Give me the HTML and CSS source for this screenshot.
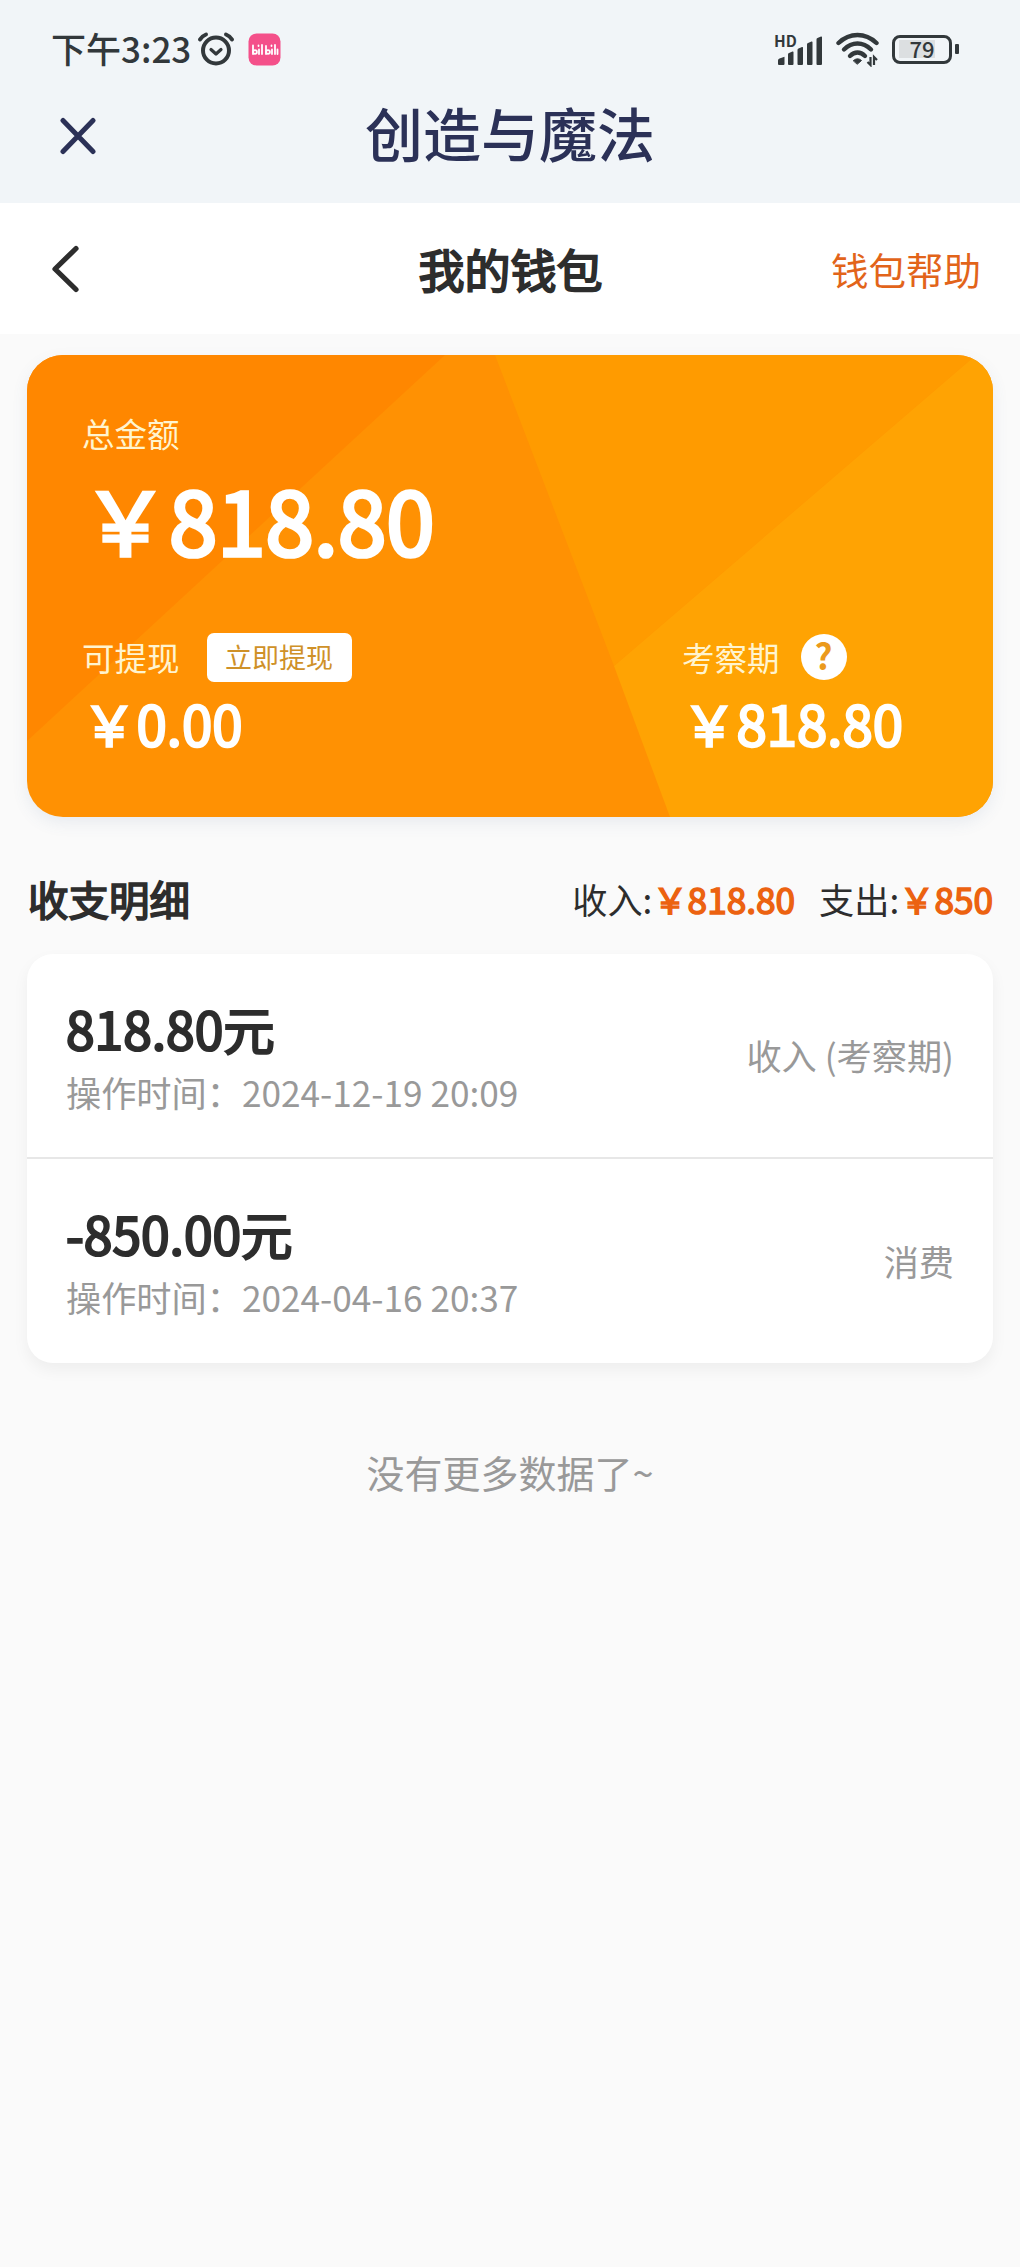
FILE: index.html
```html
<!DOCTYPE html>
<html lang="zh-CN">
<head>
<meta charset="utf-8">
<title>我的钱包</title>
<link rel="stylesheet" href="styles.css">
</head>
<body>
<header class="app-header">
  <div class="status">
    <div class="status-left">
      <span class="clock">下午3:23</span>
      <svg class="alarm" width="38" height="36" viewBox="0 0 38 36" fill="none" stroke="#32383b" stroke-linecap="round" stroke-linejoin="round">
        <circle cx="19" cy="19.5" r="13" stroke-width="4"/>
        <path d="M14 18.500l5 4.500 5-4.500" stroke-width="3.200"/>
        <path d="M3 8.500Q5 5 9 3.500M35 8.500Q33 5 29 3.500" stroke-width="4"/>
      </svg>
      <svg class="bili" width="33" height="33" viewBox="0 0 33 33">
        <rect x=".5" y=".5" width="32" height="32" rx="8" fill="#f4508a"/>
        <g fill="none" stroke="#fff" stroke-width="1.800" stroke-linecap="round">
          <path d="M5 12.500v8.500M10.500 12.500v.5M11 16.500v4.500M14 12v9M18 13v8M23.500 12.500v.5M24 16.500v4.500M27 12v9M29.500 16.500v4.500"/>
          <circle cx="7" cy="19" r="1.900"/><circle cx="20" cy="19" r="1.900"/>
        </g>
      </svg>
    </div>
    <div class="status-right">
      <div class="signal">
        <span class="hd">HD</span>
        <svg width="48" height="34" viewBox="0 0 48 34" fill="#32383b">
          <path d="M2 32v-3.500q0-1.500 1.500-2l5-1.800v7.300q0 1-1 1H3q-1 0-1-1z"/>
          <path d="M12 32V22.500q0-1 1-1.400l3.500-1.500q1-.3 1 .7V32q0 1-1 1H13q-1 0-1-1z"/>
          <path d="M21.500 32V18q0-1 1-1.400l3.500-1.500q1-.3 1 .7V32q0 1-1 1h-3.500q-1 0-1-1z"/>
          <path d="M31 32V12.500q0-1 1-1.400l3.500-1.500q1-.3 1 .7V32q0 1-1 1h-3.500q-1 0-1-1z"/>
          <path d="M40.500 32V7.500q0-1 1-1.400l3.500-1.500q1-.3 1 .7V32q0 1-1 1h-3.500q-1 0-1-1z"/>
        </svg>
      </div>
      <svg class="wifi" width="44" height="35" viewBox="0 0 44 35" fill="none" stroke="#32383b" stroke-width="4.400" stroke-linecap="round">
        <path d="M2.500 11Q11 3 21.500 3T40.500 11"/>
        <path d="M8 17.500Q14 11.500 21.500 11.500T35 17.500"/>
        <path d="M14 24Q17.500 20.500 21.500 20.500T29 24"/>
        <path d="M17.500 28.500q4-3.500 8 0l-4 3.500z" fill="#32383b" stroke-width="1"/>
        <path d="M34.500 25v8l-3-3M38 33v-8l3 3" stroke-width="2.200" stroke-linecap="butt"/>
      </svg>
      <div class="battery"><span>79</span></div>
      <i class="battery-tip"></i>
    </div>
  </div>
  <div class="titlebar">
    <svg width="38" height="38" viewBox="0 0 38 38" fill="none" stroke="#2b3157" stroke-width="5" stroke-linecap="round"><path d="M4 3.500l30 31M34 3.500L4 34.500"/></svg>
    <h1>创造与魔法</h1>
  </div>
</header>

<nav class="nav">
  <svg width="30" height="48" viewBox="0 0 30 48" fill="none" stroke="#2d2d2d" stroke-width="5.200" stroke-linecap="round" stroke-linejoin="round"><path d="M26 3.500L5 24l21 20.500"/></svg>
  <h2 class="heavy">我的钱包</h2>
  <a class="help">钱包帮助</a>
</nav>

<main>
  <section class="card">
    <svg class="facets" viewBox="0 0 966 462" preserveAspectRatio="none">
      <path fill="#ff8700" d="M0 0H418L0 386z"/>
      <path fill="#ff9b00" d="M468 0H949L587 311z"/>
      <path fill="#ffa303" d="M966 0H949L587 311 643 462H966z"/>
    </svg>
    <div class="label">总金额</div>
    <div class="total heavy">￥818.80</div>
    <div class="split">
      <div>
        <div class="label-row"><span class="label">可提现</span><button class="withdraw">立即提现</button></div>
        <div class="amount heavy">￥0.00</div>
      </div>
      <div>
        <div class="label-row"><span class="label">考察期</span><span class="question">?</span></div>
        <div class="amount heavy">￥818.80</div>
      </div>
    </div>
  </section>

  <div class="summary">
    <h3 class="heavy">收支明细</h3>
    <div class="sums">
      <span>收入:<b class="heavy">￥818.80</b></span>
      <span>支出:<b class="heavy">￥850</b></span>
    </div>
  </div>

  <ul class="records">
    <li>
      <div><div class="value heavy">818.80元</div><div class="time">操作时间：2024-12-19 20:09</div></div>
      <span class="kind">收入 (考察期)</span>
    </li>
    <li>
      <div><div class="value heavy">-850.00元</div><div class="time">操作时间：2024-04-16 20:37</div></div>
      <span class="kind">消费</span>
    </li>
  </ul>
  <p class="end">没有更多数据了~</p>
</main>
</body>
</html>
```
FILE: styles.css
```css
* { box-sizing: border-box; margin: 0; padding: 0; }
body {
  min-height: 2267px;
  background: #fafafa;
  color: #2d2d2d;
  font-family: "Noto Sans CJK SC", sans-serif;
}
h1, h2, h3, b { font-weight: 400; }
svg { display: block; flex: none; }
/* regular face thickened by an outline, keeps regular advances */
.heavy { -webkit-text-stroke: .043em currentColor; }

.app-header { height: 203px; background: #f1f5f8; }
.status {
  height: 98px;
  padding: 0 61px 0 51px;
  display: flex;
  justify-content: space-between;
  align-items: center;
  color: #32383b;
}
.status-left, .status-right { display: flex; align-items: center; }
.clock { font-size: 35px; line-height: 42px; font-weight: 500; margin-top: -3px; width: 146px; white-space: nowrap; }
.bili { margin-left: 13px; }
.signal { position: relative; margin-right: 1px; }
.hd {
  position: absolute;
  left: -2px;
  top: -1px;
  font-size: 15.500px;
  line-height: 18px;
  font-weight: 700;
}
.wifi { margin-left: 11px; }
.battery {
  width: 60px;
  height: 29px;
  margin-left: 12px;
  border: 3.500px solid #32383b;
  border-radius: 8px;
  background: linear-gradient(#dcdfe1, #dcdfe1) 4px 2px / 36px 18px no-repeat;
  display: flex;
  align-items: center;
  justify-content: center;
}
.battery span { font-size: 22px; line-height: 22px; font-weight: 500; margin-top: -2px; }
.battery-tip { width: 4px; height: 10px; margin-left: 3px; border-radius: 1px; background: #32383b; }

.titlebar {
  height: 105px;
  padding: 0 59px 37px;
  display: grid;
  grid-template-columns: 38px 1fr 38px;
  align-items: center;
}
.titlebar svg { margin-top: 7px; }
.titlebar h1 { font-size: 58px; line-height: 64px; font-weight: 500; color: #2b3157; text-align: center; }

.nav {
  height: 131px;
  padding: 0 38px 0 50px;
  background: #fff;
  display: grid;
  grid-template-columns: 140px 1fr 151px;
  align-items: center;
}
.nav h2 { font-size: 46px; line-height: 56px; margin-top: -2px; text-align: center; }
.help { font-size: 37.500px; line-height: 46px; color: #e2641a; white-space: nowrap; }

main { padding: 21px 27px 0; }
.card {
  position: relative;
  height: 462px;
  padding: 58px 0 0 55px;
  border-radius: 36px;
  background: #ff9103;
  color: #fff;
  overflow: hidden;
  isolation: isolate;
  box-shadow: 0 6px 16px rgba(80, 110, 150, .1);
}
.facets { position: absolute; inset: 0; width: 100%; height: 100%; z-index: -1; }
.label { font-size: 32.500px; line-height: 40px; color: #fff4cf; }
.total { margin-top: 20px; font-size: 87px; line-height: 90px; }
.split { margin-top: 69px; display: grid; grid-template-columns: 600px 1fr; }
.label-row { height: 50px; display: flex; align-items: center; }
.withdraw {
  width: 145px;
  height: 49px;
  margin-left: 27px;
  border: 0;
  border-radius: 7px;
  background: #fff;
  color: #cf9128;
  font: 27px/44px "Noto Sans CJK SC", sans-serif;
}
.question {
  width: 46px;
  height: 46px;
  margin-left: 21px;
  border-radius: 50%;
  background: #fff;
  color: #eb9a1c;
  font-size: 35px;
  font-weight: 700;
  line-height: 42px;
  text-align: center;
}
.amount { margin-top: 11px; font-size: 54.500px; line-height: 60px; }

.summary { height: 60px; margin-top: 52px; display: flex; align-items: center; justify-content: space-between; }
.summary h3 { font-size: 40.500px; line-height: 56px; padding-left: 1px; }
.sums { display: flex; gap: 24px; font-size: 35.200px; line-height: 44px; }
.sums b { color: #ec6210; }

.records {
  margin-top: 25px;
  list-style: none;
  border-radius: 26px;
  background: #fff;
  box-shadow: 0 7px 16px rgba(0, 0, 0, .05);
}
.records li {
  height: 203px;
  padding: 0 39px;
  display: flex;
  align-items: center;
  justify-content: space-between;
  font-size: 35.200px;
  color: #999;
}
.records li + li { height: 206px; border-top: 2px solid #e7e7e7; }
.value { font-size: 51.500px; line-height: 60px; color: #2d2d2d; }
.time { margin-top: 12px; line-height: 44px; }
.kind { margin-top: -2px; }
.end { margin-top: 84px; font-size: 38px; line-height: 50px; color: #999; text-align: center; }
```
